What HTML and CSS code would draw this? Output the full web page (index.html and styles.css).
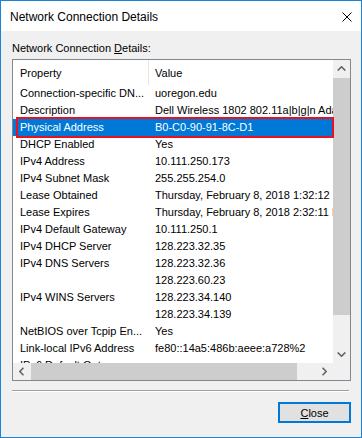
FILE: index.html
```html
<!DOCTYPE html>
<html lang="en">
<head>
    <meta charset="UTF-8">
    <meta name="viewport" content="width=device-width, initial-scale=1.0">
    <title>Network Connection Details</title>
    <link rel="stylesheet" href="styles.css">
</head>
<body>
    <div class="window">
        <!-- Title bar -->
        <div class="titlebar">
            <span class="title">Network Connection Details</span>
            <svg class="close-x" width="10" height="10" viewBox="0 0 10 10">
                <path d="M0.5 0.5 L9.5 9.5 M9.5 0.5 L0.5 9.5" stroke="#000" stroke-width="1" fill="none"/>
            </svg>
        </div>

        <div class="dialog-body">
            <div class="caption">Network Connection <u>D</u>etails:</div>

            <div class="listview">
                <div class="viewport">
                    <div class="lv-header">
                        <div class="col-prop">Property</div>
                        <div class="col-val">Value</div>
                    </div>
                    <div class="lv-row"><div class="col-prop">Connection-specific DN...</div><div class="col-val">uoregon.edu</div></div>
                    <div class="lv-row"><div class="col-prop">Description</div><div class="col-val">Dell Wireless 1802 802.11a|b|g|n Adapter</div></div>
                    <div class="lv-row selected"><div class="col-prop">Physical Address</div><div class="col-val">B0-C0-90-91-8C-D1</div></div>
                    <div class="lv-row"><div class="col-prop">DHCP Enabled</div><div class="col-val">Yes</div></div>
                    <div class="lv-row"><div class="col-prop">IPv4 Address</div><div class="col-val">10.111.250.173</div></div>
                    <div class="lv-row"><div class="col-prop">IPv4 Subnet Mask</div><div class="col-val">255.255.254.0</div></div>
                    <div class="lv-row"><div class="col-prop">Lease Obtained</div><div class="col-val">Thursday, February 8, 2018 1:32:12 PM</div></div>
                    <div class="lv-row"><div class="col-prop">Lease Expires</div><div class="col-val">Thursday, February 8, 2018 2:32:11 PM</div></div>
                    <div class="lv-row"><div class="col-prop">IPv4 Default Gateway</div><div class="col-val">10.111.250.1</div></div>
                    <div class="lv-row"><div class="col-prop">IPv4 DHCP Server</div><div class="col-val">128.223.32.35</div></div>
                    <div class="lv-row"><div class="col-prop">IPv4 DNS Servers</div><div class="col-val">128.223.32.36</div></div>
                    <div class="lv-row"><div class="col-prop"></div><div class="col-val">128.223.60.23</div></div>
                    <div class="lv-row"><div class="col-prop">IPv4 WINS Servers</div><div class="col-val">128.223.34.140</div></div>
                    <div class="lv-row"><div class="col-prop"></div><div class="col-val">128.223.34.139</div></div>
                    <div class="lv-row"><div class="col-prop">NetBIOS over Tcpip En...</div><div class="col-val">Yes</div></div>
                    <div class="lv-row"><div class="col-prop">Link-local IPv6 Address</div><div class="col-val">fe80::14a5:486b:aeee:a728%2</div></div>
                    <div class="lv-row"><div class="col-prop">IPv6 Default Gateway</div><div class="col-val"></div></div>
                </div>

                <!-- Vertical scrollbar -->
                <div class="vscroll">
                    <div class="sb-arrow">
                        <svg width="9" height="5" viewBox="0 0 9 5"><polyline points="0.7,4.5 4.5,0.8 8.3,4.5" fill="none" stroke="#606060" stroke-width="1.6"/></svg>
                    </div>
                    <div class="sb-gap"></div>
                    <div class="sb-thumb v-thumb"></div>
                    <div class="sb-track"></div>
                    <div class="sb-arrow">
                        <svg width="9" height="5" viewBox="0 0 9 5"><polyline points="0.7,0.5 4.5,4.2 8.3,0.5" fill="none" stroke="#606060" stroke-width="1.6"/></svg>
                    </div>
                </div>

                <!-- Horizontal scrollbar -->
                <div class="hscroll">
                    <div class="sb-arrow">
                        <svg width="5" height="9" viewBox="0 0 5 9"><polyline points="4.5,0.7 0.8,4.5 4.5,8.3" fill="none" stroke="#606060" stroke-width="1.6"/></svg>
                    </div>
                    <div class="sb-gap"></div>
                    <div class="sb-thumb h-thumb"></div>
                    <div class="sb-track"></div>
                    <div class="sb-arrow">
                        <svg width="5" height="9" viewBox="0 0 5 9"><polyline points="0.5,0.7 4.2,4.5 0.5,8.3" fill="none" stroke="#606060" stroke-width="1.6"/></svg>
                    </div>
                </div>
                <div class="corner"></div>
            </div>

            <div class="separator"></div>

            <div class="button-row">
                <button class="btn default"><u>C</u>lose</button>
            </div>
        </div>

        <!-- red annotation around the selected row -->
        <div class="annotation"></div>
    </div>
</body>
</html>
```

FILE: styles.css
```css
/* Windows dialog look */
body {
    margin: 0;
    padding: 0;
    font-family: "Liberation Sans", Arial, sans-serif;
    font-size: 11px;
    color: #000;
    background-color: #f0f0f0;
}
.window {
    position: relative;
    width: 362px;
    height: 438px;
    box-sizing: border-box;
    border: 1px solid #1883d7;
    background-color: #f0f0f0;
    display: flex;
    flex-direction: column;
}
.titlebar {
    height: 30px;
    background-color: #fff;
    display: flex;
    align-items: center;
    justify-content: space-between;
    padding: 0 9px 0 9px;
    font-size: 12px;
}
.title {
    margin-top: 1px;
}
.close-x {
    display: block;
    margin-top: 1px;
}
.dialog-body {
    flex: 1;
    padding: 10px 10px 0 11px;
}
.caption {
    line-height: 15px;
    height: 15px;
    margin-bottom: 3px;
}
u {
    text-decoration: underline;
    text-underline-offset: 1px;
}

/* list view */
.listview {
    display: grid;
    grid-template-columns: 320px 17px;
    grid-template-rows: 303px 17px;
    width: 337px;
    border: 1px solid #828790;
    background-color: #fff;
}
.viewport {
    overflow: hidden;
    background-color: #fff;
}
.lv-header, .lv-row {
    display: flex;
    white-space: nowrap;
}
.lv-header {
    height: 25px;
    box-sizing: border-box;
    padding-top: 6px;
    line-height: 15px;
}
.lv-header .col-prop {
    border-right: 1px solid #e5e5e5;
    margin-top: -6px;
    padding-top: 6px;
    height: 19px;
}
.lv-row {
    height: 17px;
    line-height: 17px;
}
.col-prop {
    width: 128px;
    flex: none;
    padding-left: 7px;
    overflow: hidden;
}
.lv-row .col-prop {
    width: 129px;
}
.col-val {
    padding-left: 6px;
}
.lv-row.selected {
    background-color: #0078d7;
    color: #fff;
}

/* scrollbars */
.vscroll, .hscroll {
    display: flex;
    background-color: #f0f0f0;
}
.vscroll {
    flex-direction: column;
}
.sb-arrow {
    width: 17px;
    height: 17px;
    flex: none;
    display: flex;
    align-items: center;
    justify-content: center;
}
.sb-gap {
    flex: none;
    width: 1px;
    height: 1px;
}
.sb-thumb {
    background-color: #cdcdcd;
    flex: none;
}
.v-thumb {
    height: 237px;
}
.h-thumb {
    width: 266px;
}
.sb-track {
    flex: 1;
}
.corner {
    background-color: #f0f0f0;
}

.separator {
    width: 337px;
    margin-top: 9px;
    border-top: 1px solid #a0a0a0;
    border-bottom: 1px solid #fff;
}
.button-row {
    display: flex;
    justify-content: flex-end;
    padding-top: 10px;
    padding-right: 0;
}
.btn {
    width: 73px;
    height: 21px;
    box-sizing: border-box;
    font-family: inherit;
    font-size: 11px;
    color: #000;
    background-color: #e1e1e1;
    border: 1px solid #adadad;
    padding: 0;
    margin: 0;
}
.btn.default {
    border: 2px solid #0078d7;
}

/* red box drawn over the selected row */
.annotation {
    position: absolute;
    left: 15px;
    top: 116px;
    width: 314px;
    height: 17px;
    border: 2px solid #e81123;
}
```
